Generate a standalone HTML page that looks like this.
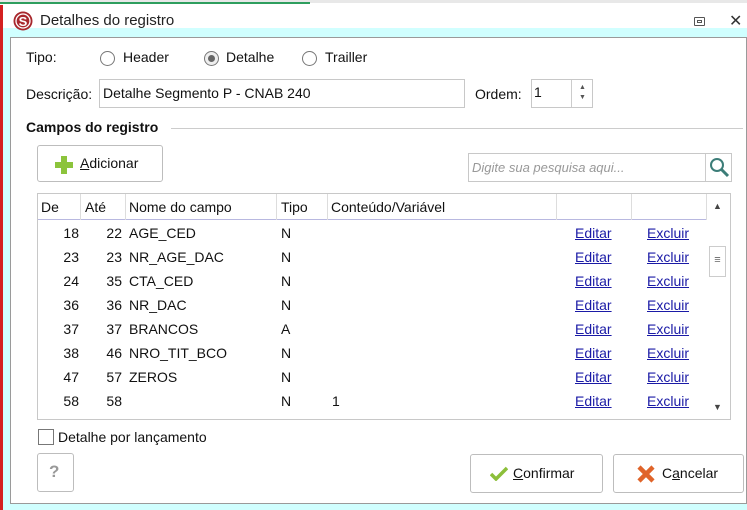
<!DOCTYPE html>
<html><head><meta charset="utf-8"><style>
*{box-sizing:border-box;margin:0;padding:0}
body{width:747px;height:510px;position:relative;overflow:hidden;background:#fff;font-family:"Liberation Sans",sans-serif;font-size:14px;color:#111}
.a{position:absolute;white-space:nowrap}
.radio{position:absolute;width:15px;height:15px;border:1px solid #777;border-radius:50%;background:#fff}
.btn{position:absolute;border:1px solid #bdbdbd;border-radius:3px;background:#fff}
.lnk{color:#1a1aa6;text-decoration:underline}
.row{position:absolute;left:0;height:24px;width:668px}
.hd{position:absolute;top:0;height:26px;border-right:1px solid #ddd}
.n1{position:absolute;right:627px;top:3px}
.n2{position:absolute;right:584px;top:3px}
</style></head><body>
<div class="a" style="left:0;top:0;width:747px;height:3px;background:#e8e8e8"></div>
<div class="a" style="left:0;top:2px;width:310px;height:2px;background:#2e9e5e"></div>
<div class="a" style="left:0;top:5px;width:3px;height:505px;background:#d42020"></div>
<div class="a" style="left:3px;top:28px;width:744px;height:9px;background:#d0ffff"></div>
<div class="a" style="left:3px;top:28px;width:7px;height:482px;background:#d0ffff"></div>
<div class="a" style="left:3px;top:503px;width:744px;height:7px;background:#d0ffff"></div>
<div class="a" style="left:10px;top:37px;width:737px;height:467px;border:1px solid #9a9a9a;background:#fff"></div>
<svg class="a" style="left:13px;top:11px" width="20" height="20" viewBox="0 0 20 20"><circle cx="10" cy="10" r="9.5" fill="#a8282d"/><circle cx="10" cy="10" r="7" fill="none" stroke="#fff" stroke-width="1.3"/><text x="10" y="15" font-size="13" font-weight="bold" fill="#fff" text-anchor="middle" font-family="Liberation Sans">S</text></svg>
<div class="a" style="left:40px;top:12px;font-size:15px;color:#222">Detalhes do registro</div>
<div class="a" style="left:694px;top:17px;width:11px;height:9px;border:1px solid #555;border-radius:1px"></div>
<div class="a" style="left:697px;top:20px;width:5px;height:3px;border:1px solid #555"></div>
<div class="a" style="left:729px;top:11px;font-size:16px;color:#333">✕</div>

<div class="a" style="left:26px;top:49px">Tipo:</div>
<div class="radio" style="left:100px;top:51px"></div><div class="a" style="left:123px;top:49px">Header</div>
<div class="radio" style="left:204px;top:51px;background:#eee"></div><div class="a" style="left:208px;top:55px;width:7px;height:7px;border-radius:50%;background:#666"></div><div class="a" style="left:226px;top:49px">Detalhe</div>
<div class="radio" style="left:302px;top:51px"></div><div class="a" style="left:325px;top:49px">Trailler</div>

<div class="a" style="left:26px;top:86px">Descrição:</div>
<div class="a" style="left:99px;top:79px;width:366px;height:29px;border:1px solid #c8c8c8"></div>
<div class="a" style="left:103px;top:85px">Detalhe Segmento P - CNAB 240</div>
<div class="a" style="left:475px;top:86px">Ordem:</div>
<div class="a" style="left:531px;top:79px;width:62px;height:29px;border:1px solid #c8c8c8"></div>
<div class="a" style="left:571px;top:80px;width:1px;height:27px;background:#ccc"></div>
<div class="a" style="left:534px;top:84px">1</div>
<div class="a" style="left:579px;top:84px;font-size:7px;color:#555">▲</div><div class="a" style="left:579px;top:94px;font-size:7px;color:#555">▼</div>

<div class="a" style="left:26px;top:119px;font-weight:bold">Campos do registro</div>
<div class="a" style="left:171px;top:128px;width:572px;height:1px;background:#ccc"></div>

<div class="btn" style="left:37px;top:145px;width:126px;height:37px"></div>
<svg class="a" style="left:55px;top:156px" width="18" height="18" viewBox="0 0 18 18"><rect x="6" y="0" width="6" height="18" fill="#8cc43c"/><rect x="0" y="6" width="18" height="6" fill="#8cc43c"/></svg>
<div class="a" style="left:80px;top:155px"><span style="text-decoration:underline">A</span>dicionar</div>

<div class="a" style="left:468px;top:153px;width:264px;height:29px;border:1px solid #c8c8c8"></div>
<div class="a" style="left:705px;top:154px;width:1px;height:27px;background:#ccc"></div>
<div class="a" style="left:472px;top:160px;font-style:italic;color:#999;font-size:13px">Digite sua pesquisa aqui...</div>
<svg class="a" style="left:709px;top:157px" width="21" height="21" viewBox="0 0 21 21"><circle cx="8" cy="8" r="6" fill="none" stroke="#3c7d78" stroke-width="2"/><line x1="12.5" y1="12.5" x2="19" y2="19" stroke="#3c7d78" stroke-width="3"/></svg>

<div class="a" style="left:37px;top:193px;width:694px;height:227px;border:1px solid #c8c8c8"></div>
<div class="a" style="left:38px;top:194px;width:668px;height:26px;border-bottom:1px solid #b8b8e0">
<div class="hd" style="left:0;width:43px"><span class="a" style="left:3px;top:5px">De</span></div>
<div class="hd" style="left:43px;width:45px"><span class="a" style="left:4px;top:5px">Até</span></div>
<div class="hd" style="left:88px;width:151px"><span class="a" style="left:3px;top:5px">Nome do campo</span></div>
<div class="hd" style="left:239px;width:51px"><span class="a" style="left:4px;top:5px">Tipo</span></div>
<div class="hd" style="left:290px;width:229px"><span class="a" style="left:3px;top:5px">Conteúdo/Variável</span></div>
<div class="hd" style="left:519px;width:75px"></div>
<div class="hd" style="left:594px;width:75px"></div>
</div>
<div class="a" style="left:713px;top:201px;font-size:9px;color:#444">▲</div>
<div class="a" style="left:709px;top:246px;width:17px;height:31px;border:1px solid #ccc;text-align:center;font-size:11px;color:#666;padding-top:7px">≡</div>
<div class="a" style="left:713px;top:402px;font-size:9px;color:#444">▼</div>

<div class="a" style="left:38px;top:222px">
<div class="row" style="top:0"><span class="n1">18</span><span class="n2">22</span><span class="a" style="left:91px;top:3px">AGE_CED</span><span class="a" style="left:243px;top:3px">N</span><span class="a lnk" style="left:537px;top:3px">Editar</span><span class="a lnk" style="left:609px;top:3px">Excluir</span></div>
<div class="row" style="top:24px"><span class="n1">23</span><span class="n2">23</span><span class="a" style="left:91px;top:3px">NR_AGE_DAC</span><span class="a" style="left:243px;top:3px">N</span><span class="a lnk" style="left:537px;top:3px">Editar</span><span class="a lnk" style="left:609px;top:3px">Excluir</span></div>
<div class="row" style="top:48px"><span class="n1">24</span><span class="n2">35</span><span class="a" style="left:91px;top:3px">CTA_CED</span><span class="a" style="left:243px;top:3px">N</span><span class="a lnk" style="left:537px;top:3px">Editar</span><span class="a lnk" style="left:609px;top:3px">Excluir</span></div>
<div class="row" style="top:72px"><span class="n1">36</span><span class="n2">36</span><span class="a" style="left:91px;top:3px">NR_DAC</span><span class="a" style="left:243px;top:3px">N</span><span class="a lnk" style="left:537px;top:3px">Editar</span><span class="a lnk" style="left:609px;top:3px">Excluir</span></div>
<div class="row" style="top:96px"><span class="n1">37</span><span class="n2">37</span><span class="a" style="left:91px;top:3px">BRANCOS</span><span class="a" style="left:243px;top:3px">A</span><span class="a lnk" style="left:537px;top:3px">Editar</span><span class="a lnk" style="left:609px;top:3px">Excluir</span></div>
<div class="row" style="top:120px"><span class="n1">38</span><span class="n2">46</span><span class="a" style="left:91px;top:3px">NRO_TIT_BCO</span><span class="a" style="left:243px;top:3px">N</span><span class="a lnk" style="left:537px;top:3px">Editar</span><span class="a lnk" style="left:609px;top:3px">Excluir</span></div>
<div class="row" style="top:144px"><span class="n1">47</span><span class="n2">57</span><span class="a" style="left:91px;top:3px">ZEROS</span><span class="a" style="left:243px;top:3px">N</span><span class="a lnk" style="left:537px;top:3px">Editar</span><span class="a lnk" style="left:609px;top:3px">Excluir</span></div>
<div class="row" style="top:168px"><span class="n1">58</span><span class="n2">58</span><span class="a" style="left:243px;top:3px">N</span><span class="a" style="left:294px;top:3px">1</span><span class="a lnk" style="left:537px;top:3px">Editar</span><span class="a lnk" style="left:609px;top:3px">Excluir</span></div>
</div>

<div class="a" style="left:38px;top:429px;width:16px;height:16px;border:1px solid #777"></div>
<div class="a" style="left:58px;top:429px">Detalhe por lançamento</div>

<div class="btn" style="left:37px;top:453px;width:37px;height:39px"></div>
<div class="a" style="left:49px;top:462px;font-size:17px;color:#999;font-weight:bold">?</div>

<div class="btn" style="left:470px;top:454px;width:133px;height:39px"></div>
<svg class="a" style="left:490px;top:466px" width="18" height="15" viewBox="0 0 18 15"><path d="M1 8 L6 13 L17 2" fill="none" stroke="#8cbf3a" stroke-width="3.5"/></svg>
<div class="a" style="left:513px;top:465px"><span style="text-decoration:underline">C</span>onfirmar</div>

<div class="btn" style="left:613px;top:454px;width:131px;height:39px"></div>
<svg class="a" style="left:637px;top:465px" width="18" height="18" viewBox="0 0 18 18"><path d="M2 2 L16 16 M16 2 L2 16" stroke="#e0642a" stroke-width="4.5"/></svg>
<div class="a" style="left:662px;top:465px">C<span style="text-decoration:underline">a</span>ncelar</div>
</body></html>
